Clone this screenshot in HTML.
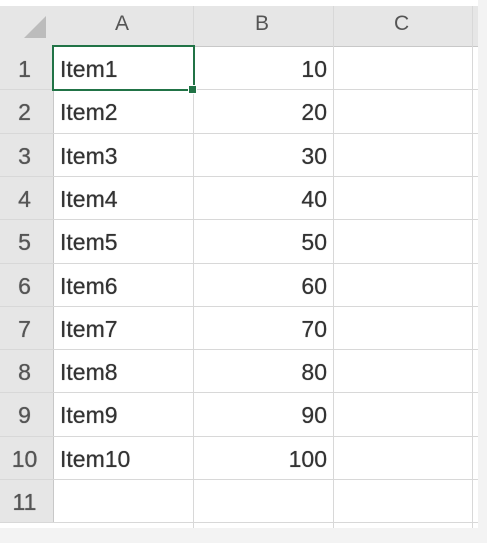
<!DOCTYPE html><html><head><style>
body{margin:0;width:487px;height:543px;background:#f3f3f3;position:relative;overflow:hidden;font-family:"Liberation Sans",sans-serif;}
.g{position:absolute;left:0;top:0;width:478px;height:528px;background:#fff;}
.hd{position:absolute;left:0;top:6px;width:478px;height:40px;background:#e6e6e6;border-bottom:1px solid #c8c8c8;}
.rh{position:absolute;left:0;top:46px;width:53px;height:476px;background:#e6e6e6;border-right:1px solid #c8c8c8;}
.t{position:absolute;color:#333;font-size:23px;text-shadow:0 0 0.6px #333;}
.h{position:absolute;color:#555;font-size:21px;top:12px;}
.vl{position:absolute;width:1px;background:#d8d8d8;top:6px;height:522px;}
.hl{position:absolute;height:1px;background:#d8d8d8;left:0;width:478px;}
</style></head><body>
<div class="g"></div>
<div class="hd"></div><div class="rh"></div>
<div class="vl" style="left:193px"></div><div class="vl" style="left:333px"></div><div class="vl" style="left:472px"></div>
<svg style="position:absolute;left:22px;top:14px" width="26" height="26"><polygon points="24,2 24,24 2,24" fill="#bcbcbc"/></svg>
<div class="h" style="left:115px">A</div><div class="h" style="left:255px">B</div><div class="h" style="left:394px">C</div>
<div id="rows"></div>
<script>
var s='';for(var i=0;i<11;i++){var y=46+i*43.3;s+='<div class="hl" style="top:'+(y+43.3)+'px"></div>';s+='<div class="t" style="top:'+(y+10)+'px;left:0;width:49px;text-align:center;color:#555">'+(i+1)+'</div>';if(i<10){s+='<div class="t" style="top:'+(y+10)+'px;left:60px">Item'+(i+1)+'</div><div class="t" style="top:'+(y+10)+'px;left:200px;width:127px;text-align:right">'+(i+1)*10+'</div>';}}
document.getElementById('rows').innerHTML=s;
</script>
<div style="position:absolute;left:52px;top:45px;width:139px;height:42px;border:2px solid #217346;"></div>
<div style="position:absolute;left:188px;top:85px;width:7px;height:7px;background:#217346;border:1px solid #fff"></div>
</body></html>
